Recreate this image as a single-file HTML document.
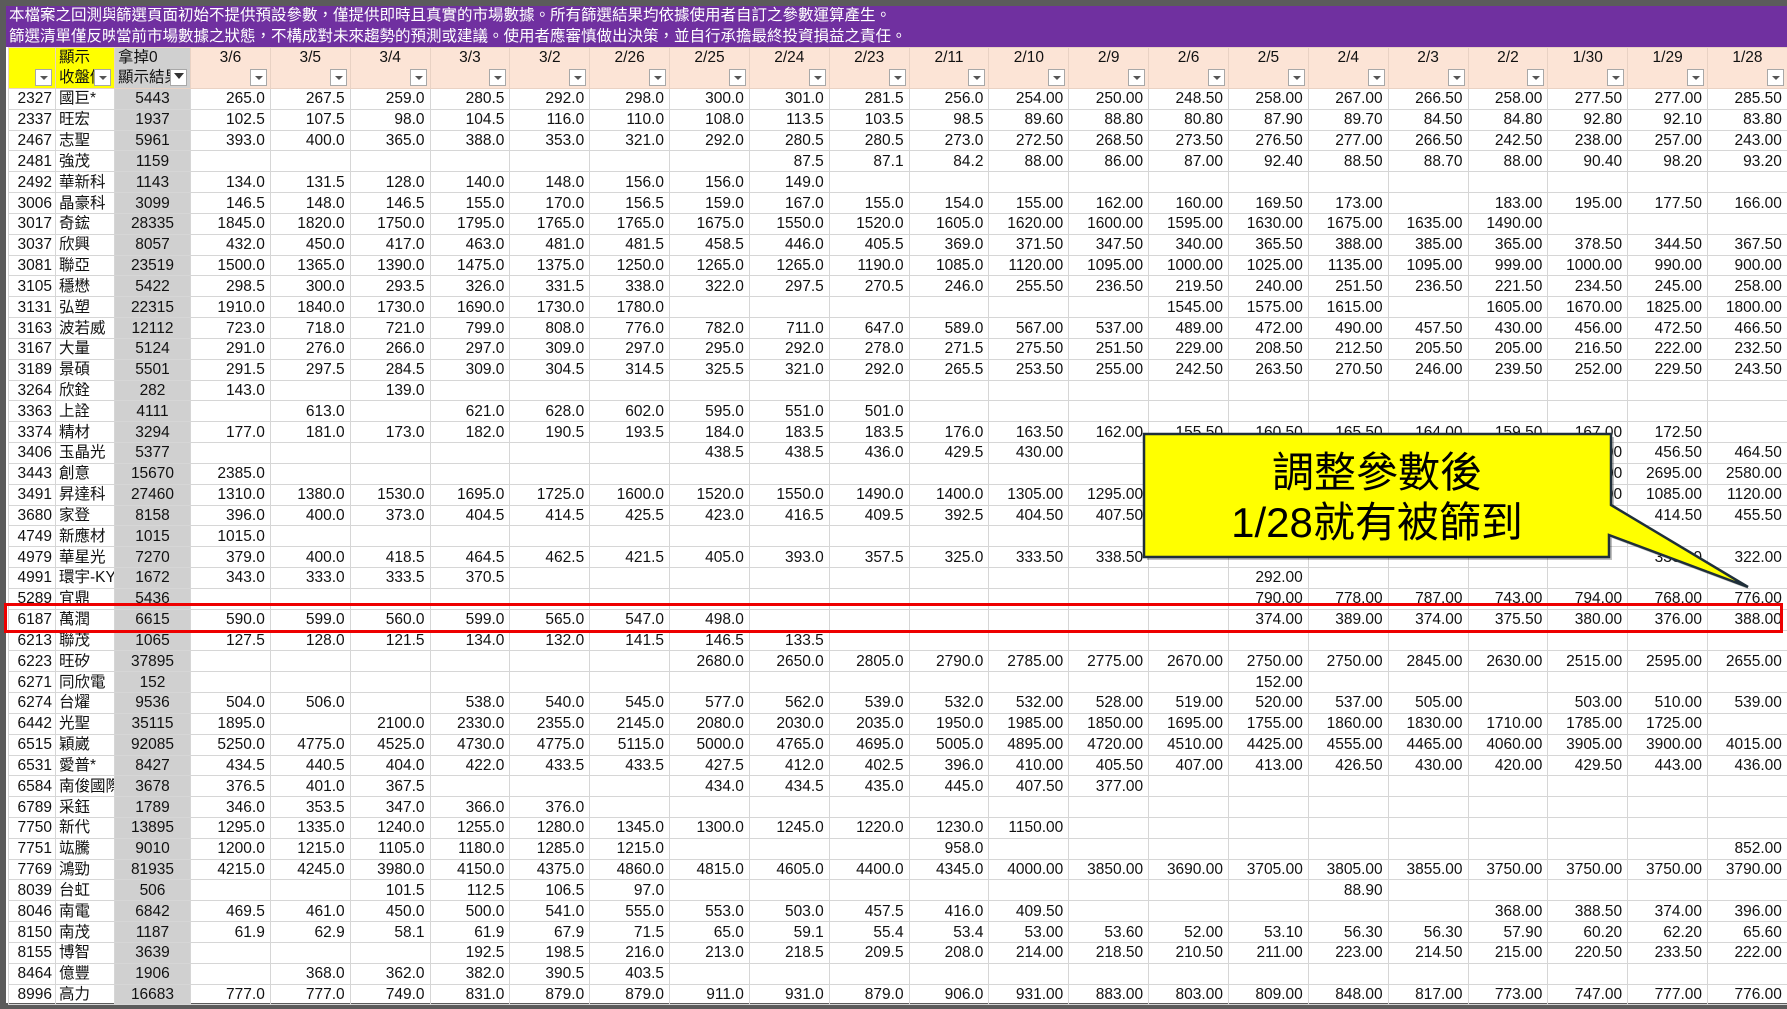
<!DOCTYPE html>
<html><head><meta charset="utf-8">
<style>
*{margin:0;padding:0;box-sizing:border-box}
body{width:1787px;height:1009px;overflow:hidden;background:#fff;position:relative;font-family:"Liberation Sans","Noto Sans CJK TC",sans-serif}
.top{position:absolute;left:0;top:0;width:1787px;height:6px;background:#5b5b5b}
.lft{position:absolute;left:0;top:0;width:6px;height:1009px;background:#5b5b5b}
.bot{position:absolute;left:0;top:1003px;width:1787px;height:6px;background:#5b5b5b}
.pur{position:absolute;left:6px;top:6px;width:1781px;height:41px;background:#7030a0;color:#fff;font-size:15.5px;line-height:20.5px;white-space:nowrap;overflow:hidden}
.pa{position:absolute;left:3px;width:106px;overflow:hidden}
.pb{position:absolute;left:110px}
table{position:absolute;left:8px;top:47px;width:1779px;border-collapse:collapse;table-layout:fixed;font-size:15.5px;color:#111}
td{border:1px solid #d6d6d6;height:20.83px;padding:0 5px 0 0;text-align:right;white-space:nowrap;overflow:hidden;line-height:19px}
td.a{text-align:right;padding-right:3px}
td.n{text-align:left;padding-left:3px}
td.c{background:#d0d0d0;text-align:center;padding:0}
tr.h td{height:39px;background:#fce4d6;position:relative;vertical-align:top;text-align:center;padding:0;line-height:20px;border-color:#e9d2c4}
tr.h td.y{background:#ffff00}
tr.h td.g{background:#d0d0d0;text-align:left;padding-left:3px}
.dd{position:absolute;right:3px;bottom:2px;width:17px;height:17px;background:#fff;border:1px solid #a8a8a8}
.dd:after{content:"";position:absolute;left:4px;top:6px;border-left:4px solid transparent;border-right:4px solid transparent;border-top:4px solid #555}
.ddf:after{content:"";position:absolute;left:3px;top:3px;border-left:5px solid transparent;border-right:5px solid transparent;border-top:6px solid #333}
.red{position:absolute;left:4px;top:603px;width:1779px;height:30px;border:3px solid #ee0000}
</style></head><body>
<div class="top"></div><div class="lft"></div><div class="bot"></div>
<div class="pur">
<div class="pa" style="top:0">本檔案之回測與</div><div class="pb" style="top:0">篩選頁面初始不提供預設參數，僅提供即時且真實的市場數據。所有篩選結果均依據使用者自訂之參數運算產生。</div>
<div class="pa" style="top:20.5px">篩選清單僅反映</div><div class="pb" style="top:20.5px">當前市場數據之狀態，不構成對未來趨勢的預測或建議。使用者應審慎做出決策，並自行承擔最終投資損益之責任。</div>
</div>
<table>
<colgroup><col style="width:47px"><col style="width:59px"><col style="width:76px">
<col span="20" style="width:79.85px"></colgroup>
<tr class="h"><td class="y"><span class="dd"></span></td><td class="y" style="text-align:left;padding-left:3px">顯示<br>收盤價<span class="dd"></span></td><td class="g">拿掉0<br>顯示結果<span class="dd ddf"></span></td>
<td>3/6<span class="dd"></span></td><td>3/5<span class="dd"></span></td><td>3/4<span class="dd"></span></td><td>3/3<span class="dd"></span></td><td>3/2<span class="dd"></span></td><td>2/26<span class="dd"></span></td><td>2/25<span class="dd"></span></td><td>2/24<span class="dd"></span></td><td>2/23<span class="dd"></span></td><td>2/11<span class="dd"></span></td><td>2/10<span class="dd"></span></td><td>2/9<span class="dd"></span></td><td>2/6<span class="dd"></span></td><td>2/5<span class="dd"></span></td><td>2/4<span class="dd"></span></td><td>2/3<span class="dd"></span></td><td>2/2<span class="dd"></span></td><td>1/30<span class="dd"></span></td><td>1/29<span class="dd"></span></td><td>1/28<span class="dd"></span></td></tr>
<tr><td class="a">2327</td><td class="n">國巨*</td><td class="c">5443</td><td>265.0</td><td>267.5</td><td>259.0</td><td>280.5</td><td>292.0</td><td>298.0</td><td>300.0</td><td>301.0</td><td>281.5</td><td>256.0</td><td>254.00</td><td>250.00</td><td>248.50</td><td>258.00</td><td>267.00</td><td>266.50</td><td>258.00</td><td>277.50</td><td>277.00</td><td>285.50</td></tr>
<tr><td class="a">2337</td><td class="n">旺宏</td><td class="c">1937</td><td>102.5</td><td>107.5</td><td>98.0</td><td>104.5</td><td>116.0</td><td>110.0</td><td>108.0</td><td>113.5</td><td>103.5</td><td>98.5</td><td>89.60</td><td>88.80</td><td>80.80</td><td>87.90</td><td>89.70</td><td>84.50</td><td>84.80</td><td>92.80</td><td>92.10</td><td>83.80</td></tr>
<tr><td class="a">2467</td><td class="n">志聖</td><td class="c">5961</td><td>393.0</td><td>400.0</td><td>365.0</td><td>388.0</td><td>353.0</td><td>321.0</td><td>292.0</td><td>280.5</td><td>280.5</td><td>273.0</td><td>272.50</td><td>268.50</td><td>273.50</td><td>276.50</td><td>277.00</td><td>266.50</td><td>242.50</td><td>238.00</td><td>257.00</td><td>243.00</td></tr>
<tr><td class="a">2481</td><td class="n">強茂</td><td class="c">1159</td><td></td><td></td><td></td><td></td><td></td><td></td><td></td><td>87.5</td><td>87.1</td><td>84.2</td><td>88.00</td><td>86.00</td><td>87.00</td><td>92.40</td><td>88.50</td><td>88.70</td><td>88.00</td><td>90.40</td><td>98.20</td><td>93.20</td></tr>
<tr><td class="a">2492</td><td class="n">華新科</td><td class="c">1143</td><td>134.0</td><td>131.5</td><td>128.0</td><td>140.0</td><td>148.0</td><td>156.0</td><td>156.0</td><td>149.0</td><td></td><td></td><td></td><td></td><td></td><td></td><td></td><td></td><td></td><td></td><td></td><td></td></tr>
<tr><td class="a">3006</td><td class="n">晶豪科</td><td class="c">3099</td><td>146.5</td><td>148.0</td><td>146.5</td><td>155.0</td><td>170.0</td><td>156.5</td><td>159.0</td><td>167.0</td><td>155.0</td><td>154.0</td><td>155.00</td><td>162.00</td><td>160.00</td><td>169.50</td><td>173.00</td><td></td><td>183.00</td><td>195.00</td><td>177.50</td><td>166.00</td></tr>
<tr><td class="a">3017</td><td class="n">奇鋐</td><td class="c">28335</td><td>1845.0</td><td>1820.0</td><td>1750.0</td><td>1795.0</td><td>1765.0</td><td>1765.0</td><td>1675.0</td><td>1550.0</td><td>1520.0</td><td>1605.0</td><td>1620.00</td><td>1600.00</td><td>1595.00</td><td>1630.00</td><td>1675.00</td><td>1635.00</td><td>1490.00</td><td></td><td></td><td></td></tr>
<tr><td class="a">3037</td><td class="n">欣興</td><td class="c">8057</td><td>432.0</td><td>450.0</td><td>417.0</td><td>463.0</td><td>481.0</td><td>481.5</td><td>458.5</td><td>446.0</td><td>405.5</td><td>369.0</td><td>371.50</td><td>347.50</td><td>340.00</td><td>365.50</td><td>388.00</td><td>385.00</td><td>365.00</td><td>378.50</td><td>344.50</td><td>367.50</td></tr>
<tr><td class="a">3081</td><td class="n">聯亞</td><td class="c">23519</td><td>1500.0</td><td>1365.0</td><td>1390.0</td><td>1475.0</td><td>1375.0</td><td>1250.0</td><td>1265.0</td><td>1265.0</td><td>1190.0</td><td>1085.0</td><td>1120.00</td><td>1095.00</td><td>1000.00</td><td>1025.00</td><td>1135.00</td><td>1095.00</td><td>999.00</td><td>1000.00</td><td>990.00</td><td>900.00</td></tr>
<tr><td class="a">3105</td><td class="n">穩懋</td><td class="c">5422</td><td>298.5</td><td>300.0</td><td>293.5</td><td>326.0</td><td>331.5</td><td>338.0</td><td>322.0</td><td>297.5</td><td>270.5</td><td>246.0</td><td>255.50</td><td>236.50</td><td>219.50</td><td>240.00</td><td>251.50</td><td>236.50</td><td>221.50</td><td>234.50</td><td>245.00</td><td>258.00</td></tr>
<tr><td class="a">3131</td><td class="n">弘塑</td><td class="c">22315</td><td>1910.0</td><td>1840.0</td><td>1730.0</td><td>1690.0</td><td>1730.0</td><td>1780.0</td><td></td><td></td><td></td><td></td><td></td><td></td><td>1545.00</td><td>1575.00</td><td>1615.00</td><td></td><td>1605.00</td><td>1670.00</td><td>1825.00</td><td>1800.00</td></tr>
<tr><td class="a">3163</td><td class="n">波若威</td><td class="c">12112</td><td>723.0</td><td>718.0</td><td>721.0</td><td>799.0</td><td>808.0</td><td>776.0</td><td>782.0</td><td>711.0</td><td>647.0</td><td>589.0</td><td>567.00</td><td>537.00</td><td>489.00</td><td>472.00</td><td>490.00</td><td>457.50</td><td>430.00</td><td>456.00</td><td>472.50</td><td>466.50</td></tr>
<tr><td class="a">3167</td><td class="n">大量</td><td class="c">5124</td><td>291.0</td><td>276.0</td><td>266.0</td><td>297.0</td><td>309.0</td><td>297.0</td><td>295.0</td><td>292.0</td><td>278.0</td><td>271.5</td><td>275.50</td><td>251.50</td><td>229.00</td><td>208.50</td><td>212.50</td><td>205.50</td><td>205.00</td><td>216.50</td><td>222.00</td><td>232.50</td></tr>
<tr><td class="a">3189</td><td class="n">景碩</td><td class="c">5501</td><td>291.5</td><td>297.5</td><td>284.5</td><td>309.0</td><td>304.5</td><td>314.5</td><td>325.5</td><td>321.0</td><td>292.0</td><td>265.5</td><td>253.50</td><td>255.00</td><td>242.50</td><td>263.50</td><td>270.50</td><td>246.00</td><td>239.50</td><td>252.00</td><td>229.50</td><td>243.50</td></tr>
<tr><td class="a">3264</td><td class="n">欣銓</td><td class="c">282</td><td>143.0</td><td></td><td>139.0</td><td></td><td></td><td></td><td></td><td></td><td></td><td></td><td></td><td></td><td></td><td></td><td></td><td></td><td></td><td></td><td></td><td></td></tr>
<tr><td class="a">3363</td><td class="n">上詮</td><td class="c">4111</td><td></td><td>613.0</td><td></td><td>621.0</td><td>628.0</td><td>602.0</td><td>595.0</td><td>551.0</td><td>501.0</td><td></td><td></td><td></td><td></td><td></td><td></td><td></td><td></td><td></td><td></td><td></td></tr>
<tr><td class="a">3374</td><td class="n">精材</td><td class="c">3294</td><td>177.0</td><td>181.0</td><td>173.0</td><td>182.0</td><td>190.5</td><td>193.5</td><td>184.0</td><td>183.5</td><td>183.5</td><td>176.0</td><td>163.50</td><td>162.00</td><td>155.50</td><td>160.50</td><td>165.50</td><td>164.00</td><td>159.50</td><td>167.00</td><td>172.50</td><td></td></tr>
<tr><td class="a">3406</td><td class="n">玉晶光</td><td class="c">5377</td><td></td><td></td><td></td><td></td><td></td><td></td><td>438.5</td><td>438.5</td><td>436.0</td><td>429.5</td><td>430.00</td><td></td><td></td><td></td><td></td><td></td><td></td><td>440.00</td><td>456.50</td><td>464.50</td></tr>
<tr><td class="a">3443</td><td class="n">創意</td><td class="c">15670</td><td>2385.0</td><td></td><td></td><td></td><td></td><td></td><td></td><td></td><td></td><td></td><td></td><td></td><td></td><td></td><td></td><td></td><td></td><td>2650.00</td><td>2695.00</td><td>2580.00</td></tr>
<tr><td class="a">3491</td><td class="n">昇達科</td><td class="c">27460</td><td>1310.0</td><td>1380.0</td><td>1530.0</td><td>1695.0</td><td>1725.0</td><td>1600.0</td><td>1520.0</td><td>1550.0</td><td>1490.0</td><td>1400.0</td><td>1305.00</td><td>1295.00</td><td></td><td></td><td></td><td></td><td></td><td>1100.00</td><td>1085.00</td><td>1120.00</td></tr>
<tr><td class="a">3680</td><td class="n">家登</td><td class="c">8158</td><td>396.0</td><td>400.0</td><td>373.0</td><td>404.5</td><td>414.5</td><td>425.5</td><td>423.0</td><td>416.5</td><td>409.5</td><td>392.5</td><td>404.50</td><td>407.50</td><td></td><td></td><td></td><td></td><td></td><td></td><td>414.50</td><td>455.50</td></tr>
<tr><td class="a">4749</td><td class="n">新應材</td><td class="c">1015</td><td>1015.0</td><td></td><td></td><td></td><td></td><td></td><td></td><td></td><td></td><td></td><td></td><td></td><td></td><td></td><td></td><td></td><td></td><td></td><td></td><td></td></tr>
<tr><td class="a">4979</td><td class="n">華星光</td><td class="c">7270</td><td>379.0</td><td>400.0</td><td>418.5</td><td>464.5</td><td>462.5</td><td>421.5</td><td>405.0</td><td>393.0</td><td>357.5</td><td>325.0</td><td>333.50</td><td>338.50</td><td></td><td></td><td></td><td></td><td></td><td></td><td>330.00</td><td>322.00</td></tr>
<tr><td class="a">4991</td><td class="n">環宇-KY</td><td class="c">1672</td><td>343.0</td><td>333.0</td><td>333.5</td><td>370.5</td><td></td><td></td><td></td><td></td><td></td><td></td><td></td><td></td><td></td><td>292.00</td><td></td><td></td><td></td><td></td><td></td><td></td></tr>
<tr><td class="a">5289</td><td class="n">宜鼎</td><td class="c">5436</td><td></td><td></td><td></td><td></td><td></td><td></td><td></td><td></td><td></td><td></td><td></td><td></td><td></td><td>790.00</td><td>778.00</td><td>787.00</td><td>743.00</td><td>794.00</td><td>768.00</td><td>776.00</td></tr>
<tr><td class="a">6187</td><td class="n">萬潤</td><td class="c">6615</td><td>590.0</td><td>599.0</td><td>560.0</td><td>599.0</td><td>565.0</td><td>547.0</td><td>498.0</td><td></td><td></td><td></td><td></td><td></td><td></td><td>374.00</td><td>389.00</td><td>374.00</td><td>375.50</td><td>380.00</td><td>376.00</td><td>388.00</td></tr>
<tr><td class="a">6213</td><td class="n">聯茂</td><td class="c">1065</td><td>127.5</td><td>128.0</td><td>121.5</td><td>134.0</td><td>132.0</td><td>141.5</td><td>146.5</td><td>133.5</td><td></td><td></td><td></td><td></td><td></td><td></td><td></td><td></td><td></td><td></td><td></td><td></td></tr>
<tr><td class="a">6223</td><td class="n">旺矽</td><td class="c">37895</td><td></td><td></td><td></td><td></td><td></td><td></td><td>2680.0</td><td>2650.0</td><td>2805.0</td><td>2790.0</td><td>2785.00</td><td>2775.00</td><td>2670.00</td><td>2750.00</td><td>2750.00</td><td>2845.00</td><td>2630.00</td><td>2515.00</td><td>2595.00</td><td>2655.00</td></tr>
<tr><td class="a">6271</td><td class="n">同欣電</td><td class="c">152</td><td></td><td></td><td></td><td></td><td></td><td></td><td></td><td></td><td></td><td></td><td></td><td></td><td></td><td>152.00</td><td></td><td></td><td></td><td></td><td></td><td></td></tr>
<tr><td class="a">6274</td><td class="n">台燿</td><td class="c">9536</td><td>504.0</td><td>506.0</td><td></td><td>538.0</td><td>540.0</td><td>545.0</td><td>577.0</td><td>562.0</td><td>539.0</td><td>532.0</td><td>532.00</td><td>528.00</td><td>519.00</td><td>520.00</td><td>537.00</td><td>505.00</td><td></td><td>503.00</td><td>510.00</td><td>539.00</td></tr>
<tr><td class="a">6442</td><td class="n">光聖</td><td class="c">35115</td><td>1895.0</td><td></td><td>2100.0</td><td>2330.0</td><td>2355.0</td><td>2145.0</td><td>2080.0</td><td>2030.0</td><td>2035.0</td><td>1950.0</td><td>1985.00</td><td>1850.00</td><td>1695.00</td><td>1755.00</td><td>1860.00</td><td>1830.00</td><td>1710.00</td><td>1785.00</td><td>1725.00</td><td></td></tr>
<tr><td class="a">6515</td><td class="n">穎崴</td><td class="c">92085</td><td>5250.0</td><td>4775.0</td><td>4525.0</td><td>4730.0</td><td>4775.0</td><td>5115.0</td><td>5000.0</td><td>4765.0</td><td>4695.0</td><td>5005.0</td><td>4895.00</td><td>4720.00</td><td>4510.00</td><td>4425.00</td><td>4555.00</td><td>4465.00</td><td>4060.00</td><td>3905.00</td><td>3900.00</td><td>4015.00</td></tr>
<tr><td class="a">6531</td><td class="n">愛普*</td><td class="c">8427</td><td>434.5</td><td>440.5</td><td>404.0</td><td>422.0</td><td>433.5</td><td>433.5</td><td>427.5</td><td>412.0</td><td>402.5</td><td>396.0</td><td>410.00</td><td>405.50</td><td>407.00</td><td>413.00</td><td>426.50</td><td>430.00</td><td>420.00</td><td>429.50</td><td>443.00</td><td>436.00</td></tr>
<tr><td class="a">6584</td><td class="n">南俊國際</td><td class="c">3678</td><td>376.5</td><td>401.0</td><td>367.5</td><td></td><td></td><td></td><td>434.0</td><td>434.5</td><td>435.0</td><td>445.0</td><td>407.50</td><td>377.00</td><td></td><td></td><td></td><td></td><td></td><td></td><td></td><td></td></tr>
<tr><td class="a">6789</td><td class="n">采鈺</td><td class="c">1789</td><td>346.0</td><td>353.5</td><td>347.0</td><td>366.0</td><td>376.0</td><td></td><td></td><td></td><td></td><td></td><td></td><td></td><td></td><td></td><td></td><td></td><td></td><td></td><td></td><td></td></tr>
<tr><td class="a">7750</td><td class="n">新代</td><td class="c">13895</td><td>1295.0</td><td>1335.0</td><td>1240.0</td><td>1255.0</td><td>1280.0</td><td>1345.0</td><td>1300.0</td><td>1245.0</td><td>1220.0</td><td>1230.0</td><td>1150.00</td><td></td><td></td><td></td><td></td><td></td><td></td><td></td><td></td><td></td></tr>
<tr><td class="a">7751</td><td class="n">竑騰</td><td class="c">9010</td><td>1200.0</td><td>1215.0</td><td>1105.0</td><td>1180.0</td><td>1285.0</td><td>1215.0</td><td></td><td></td><td></td><td>958.0</td><td></td><td></td><td></td><td></td><td></td><td></td><td></td><td></td><td></td><td>852.00</td></tr>
<tr><td class="a">7769</td><td class="n">鴻勁</td><td class="c">81935</td><td>4215.0</td><td>4245.0</td><td>3980.0</td><td>4150.0</td><td>4375.0</td><td>4860.0</td><td>4815.0</td><td>4605.0</td><td>4400.0</td><td>4345.0</td><td>4000.00</td><td>3850.00</td><td>3690.00</td><td>3705.00</td><td>3805.00</td><td>3855.00</td><td>3750.00</td><td>3750.00</td><td>3750.00</td><td>3790.00</td></tr>
<tr><td class="a">8039</td><td class="n">台虹</td><td class="c">506</td><td></td><td></td><td>101.5</td><td>112.5</td><td>106.5</td><td>97.0</td><td></td><td></td><td></td><td></td><td></td><td></td><td></td><td></td><td>88.90</td><td></td><td></td><td></td><td></td><td></td></tr>
<tr><td class="a">8046</td><td class="n">南電</td><td class="c">6842</td><td>469.5</td><td>461.0</td><td>450.0</td><td>500.0</td><td>541.0</td><td>555.0</td><td>553.0</td><td>503.0</td><td>457.5</td><td>416.0</td><td>409.50</td><td></td><td></td><td></td><td></td><td></td><td>368.00</td><td>388.50</td><td>374.00</td><td>396.00</td></tr>
<tr><td class="a">8150</td><td class="n">南茂</td><td class="c">1187</td><td>61.9</td><td>62.9</td><td>58.1</td><td>61.9</td><td>67.9</td><td>71.5</td><td>65.0</td><td>59.1</td><td>55.4</td><td>53.4</td><td>53.00</td><td>53.60</td><td>52.00</td><td>53.10</td><td>56.30</td><td>56.30</td><td>57.90</td><td>60.20</td><td>62.20</td><td>65.60</td></tr>
<tr><td class="a">8155</td><td class="n">博智</td><td class="c">3639</td><td></td><td></td><td></td><td>192.5</td><td>198.5</td><td>216.0</td><td>213.0</td><td>218.5</td><td>209.5</td><td>208.0</td><td>214.00</td><td>218.50</td><td>210.50</td><td>211.00</td><td>223.00</td><td>214.50</td><td>215.00</td><td>220.50</td><td>233.50</td><td>222.00</td></tr>
<tr><td class="a">8464</td><td class="n">億豐</td><td class="c">1906</td><td></td><td>368.0</td><td>362.0</td><td>382.0</td><td>390.5</td><td>403.5</td><td></td><td></td><td></td><td></td><td></td><td></td><td></td><td></td><td></td><td></td><td></td><td></td><td></td><td></td></tr>
<tr><td class="a">8996</td><td class="n">高力</td><td class="c">16683</td><td>777.0</td><td>777.0</td><td>749.0</td><td>831.0</td><td>879.0</td><td>879.0</td><td>911.0</td><td>931.0</td><td>879.0</td><td>906.0</td><td>931.00</td><td>883.00</td><td>803.00</td><td>809.00</td><td>848.00</td><td>817.00</td><td>773.00</td><td>747.00</td><td>777.00</td><td>776.00</td></tr>
</table>
<div class="red"></div>
<svg style="position:absolute;left:0;top:0" width="1787" height="1009">
<path d="M1144,434 H1611 V505 L1748,587 L1609,535 V557 H1144 Z" fill="#000" opacity="0.25" transform="translate(3,3)"/>
<path d="M1144,434 H1611 V505 L1748,587 L1609,535 V557 H1144 Z" fill="#ffff00" stroke="#1f2f3a" stroke-width="2.5"/>
<text x="1377" y="487" font-size="42" text-anchor="middle" font-family="Liberation Sans, Noto Sans CJK TC, sans-serif" fill="#000">調整參數後</text>
<text x="1377" y="537" font-size="42" text-anchor="middle" font-family="Liberation Sans, Noto Sans CJK TC, sans-serif" fill="#000">1/28就有被篩到</text>
</svg>
</body></html>
